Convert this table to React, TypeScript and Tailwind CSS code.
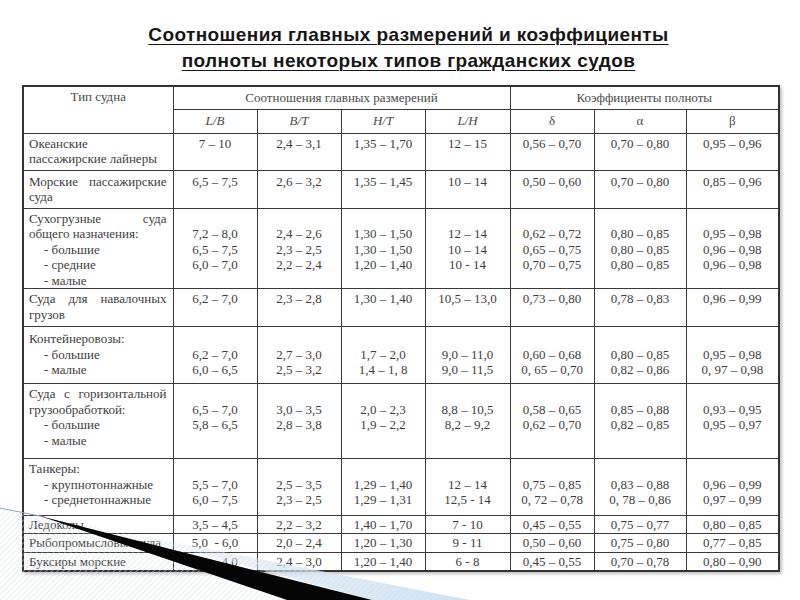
import React from 'react';

type Line = { t: string; j?: boolean; i?: boolean };
type Row = { h: string; pt: string; single?: boolean; name: Line[]; vals: string[][] };

const rows: Row[] = [
  {
    h: 'h-[37px]', pt: 'pt-[2px]',
    name: [{ t: 'Океанские' }, { t: 'пассажирские лайнеры' }],
    vals: [['7 – 10'], ['2,4 – 3,1'], ['1,35 – 1,70'], ['12 – 15'], ['0,56 – 0,70'], ['0,70 – 0,80'], ['0,95 – 0,96']],
  },
  {
    h: 'h-[38px]', pt: 'pt-[3px]',
    name: [{ t: 'Морские пассажирские', j: true }, { t: 'суда' }],
    vals: [['6,5 – 7,5'], ['2,6 – 3,2'], ['1,35 – 1,45'], ['10 – 14'], ['0,50 – 0,60'], ['0,70 – 0,80'], ['0,85 – 0,96']],
  },
  {
    h: 'h-[79px]', pt: 'pt-[2px]',
    name: [
      { t: 'Сухогрузные суда', j: true },
      { t: 'общего назначения:' },
      { t: '- большие', i: true },
      { t: '- средние', i: true },
      { t: '- малые', i: true },
    ],
    vals: [
      ['', '7,2 – 8,0', '6,5 – 7,5', '6,0 – 7,0'],
      ['', '2,4 – 2,6', '2,3 – 2,5', '2,2 – 2,4'],
      ['', '1,30 – 1,50', '1,30 – 1,50', '1,20 – 1,40'],
      ['', '12 – 14', '10 – 14', '10 - 14'],
      ['', '0,62 – 0,72', '0,65 – 0,75', '0,70 – 0,75'],
      ['', '0,80 – 0,85', '0,80 – 0,85', '0,80 – 0,85'],
      ['', '0,95 – 0,98', '0,96 – 0,98', '0,96 – 0,98'],
    ],
  },
  {
    h: 'h-[38px]', pt: 'pt-[2px]',
    name: [{ t: 'Суда для навалочных', j: true }, { t: 'грузов' }],
    vals: [['6,2 – 7,0'], ['2,3 – 2,8'], ['1,30 – 1,40'], ['10,5 – 13,0'], ['0,73 – 0,80'], ['0,78 – 0,83'], ['0,96 – 0,99']],
  },
  {
    h: 'h-[57px]', pt: 'pt-[4px]',
    name: [{ t: 'Контейнеровозы:' }, { t: '- большие', i: true }, { t: '- малые', i: true }],
    vals: [
      ['', '6,2 – 7,0', '6,0 – 6,5'],
      ['', '2,7 – 3,0', '2,5 – 3,2'],
      ['', '1,7 – 2,0', '1,4 – 1, 8'],
      ['', '9,0 – 11,0', '9,0 – 11,5'],
      ['', '0,60 – 0,68', '0, 65 – 0,70'],
      ['', '0,80 – 0,85', '0,82 – 0,86'],
      ['', '0,95 – 0,98', '0, 97 – 0,98'],
    ],
  },
  {
    h: 'h-[75px]', pt: 'pt-[2px]',
    name: [
      { t: 'Суда с горизонтальной', j: true },
      { t: 'грузообработкой:' },
      { t: '- большие', i: true },
      { t: '- малые', i: true },
    ],
    vals: [
      ['', '6,5 – 7,0', '5,8 – 6,5'],
      ['', '3,0 – 3,5', '2,8 – 3,8'],
      ['', '2,0 – 2,3', '1,9 – 2,2'],
      ['', '8,8 – 10,5', '8,2 – 9,2'],
      ['', '0,58 – 0,65', '0,62 – 0,70'],
      ['', '0,85 – 0,88', '0,82 – 0,85'],
      ['', '0,93 – 0,95', '0,95 – 0,97'],
    ],
  },
  {
    h: 'h-[57px]', pt: 'pt-[2px]',
    name: [{ t: 'Танкеры:' }, { t: '- крупнотоннажные', i: true }, { t: '- среднетоннажные', i: true }],
    vals: [
      ['', '5,5 – 7,0', '6,0 – 7,5'],
      ['', '2,5 – 3,5', '2,3 – 2,5'],
      ['', '1,29 – 1,40', '1,29 – 1,31'],
      ['', '12 – 14', '12,5 - 14'],
      ['', '0,75 – 0,85', '0, 72 – 0,78'],
      ['', '0,83 – 0,88', '0, 78 – 0,86'],
      ['', '0,96 – 0,99', '0,97 – 0,99'],
    ],
  },
  {
    h: 'h-[18px]', pt: 'pt-0', single: true,
    name: [{ t: 'Ледоколы' }],
    vals: [['3,5 – 4,5'], ['2,2 – 3,2'], ['1,40 – 1,70'], ['7 - 10'], ['0,45 – 0,55'], ['0,75 – 0,77'], ['0,80 – 0,85']],
  },
  {
    h: 'h-[19px]', pt: 'pt-0', single: true,
    name: [{ t: 'Рыбопромысловые суда' }],
    vals: [['5,0  - 6,0'], ['2,0 – 2,4'], ['1,20 – 1,30'], ['9 - 11'], ['0,50 – 0,60'], ['0,75 – 0,80'], ['0,77 – 0,85']],
  },
  {
    h: 'h-[18px]', pt: 'pt-0', single: true,
    name: [{ t: 'Буксиры морские' }],
    vals: [['3,0 – 4,0'], ['2,4 – 3,0'], ['1,20 – 1,40'], ['6 - 8'], ['0,45 – 0,55'], ['0,70 – 0,78'], ['0,80 – 0,90']],
  },
];

const cell = 'border border-[#3a3a3a] p-0';

function NameLine({ line }: { line: Line }) {
  if (line.j) {
    return (
      <div className="flex justify-between">
        {line.t.split(' ').map((w, k) => (
          <span key={k}>{w}</span>
        ))}
      </div>
    );
  }
  return <div className={line.i ? 'pl-[15px]' : ''}>{line.t}</div>;
}

export default function App() {
  return (
    <div className="relative w-[800px] h-[600px] bg-white overflow-hidden">
      {/* Title */}
      <div className="pt-[22px] pl-[17px] text-center font-['Liberation_Sans',Arial,sans-serif] font-bold text-[19px] tracking-[0.4px] leading-[26px] text-[#161616] underline underline-offset-[3px] decoration-1">
        <div>Соотношения главных размерений и коэффициенты</div>
        <div>полноты некоторых типов гражданских судов</div>
      </div>

      {/* Table */}
      <table className="ml-[22px] mt-[11px] w-[756px] table-fixed border-collapse border-2 border-[#333] font-['Liberation_Serif','Times_New_Roman',serif] text-[13px] leading-[15.5px] text-[#3d3d3d] shadow-[2px_2px_3px_rgba(0,0,0,0.25)]">
        <colgroup>
          <col className="w-[150px]" />
          <col className="w-[84px]" />
          <col className="w-[84px]" />
          <col className="w-[84px]" />
          <col className="w-[85px]" />
          <col className="w-[84px]" />
          <col className="w-[92px]" />
          <col className="w-[93px]" />
        </colgroup>
        <thead className="text-[#4a4a4a]">
          <tr className="h-[23px]">
            <th rowSpan={2} className={`${cell} align-top pt-[2px] font-normal`}>Тип судна</th>
            <th colSpan={4} className={`${cell} font-normal`}>Соотношения главных размерений</th>
            <th colSpan={3} className={`${cell} font-normal`}>Коэффициенты полноты</th>
          </tr>
          <tr className="h-[24px]">
            {['L/B', 'B/T', 'H/T', 'L/H'].map((h) => (
              <th key={h} className={`${cell} font-normal italic`}>{h}</th>
            ))}
            {['δ', 'α', 'β'].map((h) => (
              <th key={h} className={`${cell} font-normal`}>{h}</th>
            ))}
          </tr>
        </thead>
        <tbody>
          {rows.map((r, idx) => (
            <tr key={idx} className={r.h}>
              <td className={`${cell} ${r.single ? 'align-middle' : 'align-top ' + r.pt} pl-[5px] pr-[6px]`}>
                {r.name.map((l, k) => (
                  <NameLine key={k} line={l} />
                ))}
              </td>
              {r.vals.map((v, c) => (
                <td key={c} className={`${cell} ${r.single ? 'align-middle' : 'align-top ' + r.pt} text-center whitespace-pre`}>
                  {v.map((s, k) => (
                    <div key={k} className="h-[15.5px]">{s}</div>
                  ))}
                </td>
              ))}
            </tr>
          ))}
        </tbody>
      </table>

      {/* Slide decoration */}
      <svg className="absolute inset-0 pointer-events-none" width="800" height="600" viewBox="0 0 800 600">
        <defs>
          <pattern id="hatch" width="4" height="4" patternUnits="userSpaceOnUse" patternTransform="rotate(45)">
            <line x1="0" y1="0" x2="0" y2="4" stroke="#cfd8df" strokeWidth="1.4" />
          </pattern>
          <linearGradient id="blue" x1="0" y1="0" x2="1" y2="0">
            <stop offset="0" stopColor="#d6e7f2" stopOpacity="0" />
            <stop offset="0.5" stopColor="#d6e7f2" stopOpacity="0.7" />
            <stop offset="1" stopColor="#c8def0" stopOpacity="0.9" />
          </linearGradient>
        </defs>
        <polygon points="0,508 480,602 0,602" fill="url(#hatch)" opacity="0.7" />
        <polygon points="120,532 480,602 380,602" fill="url(#blue)" />
        <line x1="0" y1="508" x2="45" y2="517" stroke="#8fa3b3" strokeWidth="1" />
        <polygon points="40,516 376,601 290,601" fill="#050505" />
      </svg>
    </div>
  );
}
